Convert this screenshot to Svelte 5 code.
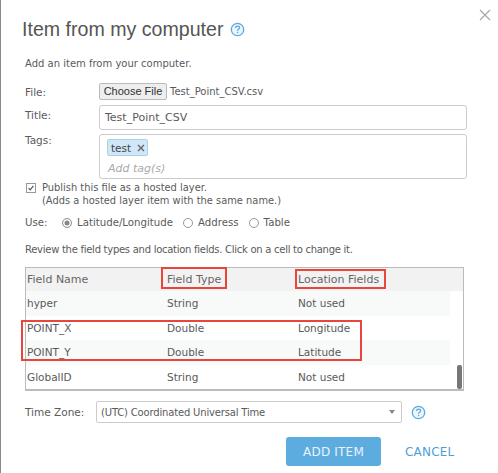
<script>
  const rows = [
    { name: "hyper", type: "String", loc: "Not used" },
    { name: "POINT_X", type: "Double", loc: "Longitude" },
    { name: "POINT_Y", type: "Double", loc: "Latitude" },
    { name: "GlobalID", type: "String", loc: "Not used" }
  ];
  const useOptions = ["Latitude/Longitude", "Address", "Table"];
</script>

{#snippet help(cls)}
  <svg class={cls} viewBox="0 0 16 16" aria-hidden="true">
    <circle cx="8" cy="8" r="6.6" fill="#eef6fc" stroke="#5ea9dd" stroke-width="1.4" />
    <path d="M5.9 6.3c0-1.3 1-2 2.2-2s2.1.7 2.1 1.8c0 1.6-2.2 1.6-2.2 3.3" fill="none" stroke="#5ea9dd" stroke-width="1.4" />
    <rect x="7.3" y="10.4" width="1.5" height="1.5" fill="#5ea9dd" />
  </svg>
{/snippet}

<div class="dialog">
  <button class="close" aria-label="Close">
    <svg viewBox="0 0 12 12"><path d="M1 1l10 10M11 1L1 11" stroke="#a8a8a8" stroke-width="1.2" fill="none" /></svg>
  </button>

  <h1>Item from my computer {@render help("help-title")}</h1>
  <p class="intro">Add an item from your computer.</p>

  <div class="form-row file-row">
    <span class="label">File:</span>
    <span class="choose">Choose File</span>
    <span class="filename">Test_Point_CSV.csv</span>
  </div>
  <div class="form-row title-row">
    <span class="label">Title:</span>
    <div class="input">Test_Point_CSV</div>
  </div>
  <div class="form-row tags-row">
    <span class="label">Tags:</span>
    <div class="input tags">
      <span class="tag">test <svg class="tag-x" viewBox="0 0 8 8"><path d="M1 1l6 6M7 1L1 7" stroke="#666" stroke-width="1.4" fill="none" /></svg></span>
      <span class="placeholder">Add tag(s)</span>
    </div>
  </div>

  <div class="publish">
    <span class="checkbox">
      <svg viewBox="0 0 10 10"><path d="M2 5.2l2 2.2 4-5" fill="none" stroke="#555" stroke-width="1.5" /></svg>
    </span>
    <span>Publish this file as a hosted layer.<br />(Adds a hosted layer item with the same name.)</span>
  </div>

  <div class="use">
    <span class="use-label">Use:</span>
    {#each useOptions as opt, i}
      <span class="radio-opt">
        <span class="radio" class:on={i === 0}></span>{opt}
      </span>
    {/each}
  </div>

  <p class="review">Review the field types and location fields. Click on a cell to change it.</p>

  <div class="table">
    <div class="thead">
      <span>Field Name</span><span>Field Type</span><span>Location Fields</span>
    </div>
    {#each rows as row, i}
      <div class="row" class:alt={i % 2 === 0}>
        <span>{row.name}</span><span>{row.type}</span><span>{row.loc}</span>
      </div>
    {/each}
    <div class="thumb"></div>
    <div class="mark mark-type"></div>
    <div class="mark mark-loc"></div>
    <div class="mark mark-rows"></div>
  </div>

  <div class="tz">
    <span class="tz-label">Time Zone:</span>
    <div class="select">
      <span>(UTC) Coordinated Universal Time</span>
      <span class="caret"></span>
    </div>
    {@render help("help-tz")}
  </div>

  <div class="actions">
    <button class="add">ADD ITEM</button>
    <button class="cancel">CANCEL</button>
  </div>
</div>

<style>
  :global(body) {
    margin: 0;
    background: #fff;
  }
  .dialog {
    position: relative;
    box-sizing: border-box;
    width: 498px;
    height: 473px;
    padding: 0 0 0 24px;
    border-left: 1px solid #8a8a8a;
    background: #fff;
    color: #5a5a5a;
    font-family: "DejaVu Sans", sans-serif;
    font-size: 10.5px;
    overflow: hidden;
  }
  .close {
    position: absolute;
    top: 9px;
    right: 7px;
    width: 12px;
    height: 12px;
    padding: 0;
    border: 0;
    background: none;
  }
  .close svg {
    display: block;
  }
  h1 {
    margin: 0 0 0 -3px;
    padding-top: 15px;
    height: 28px;
    line-height: 28px;
    font-family: "Liberation Sans", sans-serif;
    font-size: 19.6px;
    font-weight: 400;
    color: #555;
    display: flex;
    align-items: center;
    gap: 7px;
  }
  .help-title {
    width: 15px;
    height: 15px;
  }
  .intro {
    margin: 14px 0 0;
    height: 13px;
    line-height: 13px;
    font-size: 10px;
  }
  .form-row {
    display: flex;
  }
  .label {
    width: 74px;
    flex: none;
  }
  .file-row {
    margin-top: 13px;
    align-items: center;
    height: 17px;
  }
  .choose {
    box-sizing: border-box;
    width: 68px;
    height: 17px;
    line-height: 15px;
    text-align: center;
    border: 1px solid #bbb;
    border-radius: 2px;
    background: #eee;
    font-family: "Liberation Sans", sans-serif;
    font-size: 11px;
    color: #333;
  }
  .filename {
    margin-left: 3px;
    font-size: 10px;
  }
  .input {
    box-sizing: border-box;
    width: 368px;
    border: 1px solid #ccc;
    border-radius: 3px;
    background: #fff;
  }
  .title-row {
    margin-top: 5px;
  }
  .title-row .label {
    padding-top: 4px;
  }
  .title-row .input {
    height: 25px;
    line-height: 23px;
    padding-left: 5px;
    font-size: 11px;
  }
  .tags-row {
    margin-top: 4px;
  }
  .tags {
    height: 45px;
    padding: 4px 7px;
    display: flex;
    flex-direction: column;
    align-items: flex-start;
  }
  .tag {
    box-sizing: border-box;
    display: flex;
    align-items: center;
    flex: none;
    height: 17px;
    padding: 0 2px 0 3px;
    border: 1px solid #a9d2ee;
    border-radius: 2px;
    background: #cfe7f7;
    font-size: 10.5px;
    color: #444;
  }
  .tag-x {
    width: 8px;
    height: 8px;
    margin-left: 6px;
  }
  .placeholder {
    margin: 6px 0 0 1px;
    font-style: italic;
    font-size: 11px;
    color: #aaa;
  }
  .publish {
    display: flex;
    margin-top: 2px;
    line-height: 13px;
    font-size: 9.9px;
  }
  .checkbox {
    box-sizing: border-box;
    width: 10px;
    height: 10px;
    margin: 2px 6px 0 1px;
    border: 1px solid #999;
    flex: none;
  }
  .checkbox svg {
    display: block;
  }
  .use {
    display: flex;
    align-items: center;
    margin-top: 9px;
    height: 13px;
    font-size: 10.2px;
  }
  .use-label {
    width: 37px;
  }
  .radio-opt {
    display: flex;
    align-items: center;
    margin-right: 10px;
  }
  .radio {
    box-sizing: border-box;
    width: 10px;
    height: 10px;
    margin-right: 5px;
    border: 1px solid #999;
    border-radius: 50%;
  }
  .radio.on {
    background: #888;
    box-shadow: inset 0 0 0 1.5px #fff;
  }
  .review {
    margin: 14px 0 0;
    height: 13px;
    line-height: 13px;
    font-size: 10px;
    letter-spacing: -0.27px;
  }
  .table {
    position: relative;
    box-sizing: border-box;
    width: 439px;
    height: 124px;
    margin-top: 11px;
    border: 1px solid #bbb;
    border-bottom-width: 2px;
  }
  .thead,
  .row {
    display: grid;
    grid-template-columns: 140px 131px 1fr;
    align-items: center;
    padding-left: 1px;
  }
  .thead {
    height: 23px;
    background: #f2f2f2;
    font-size: 11px;
    color: #666;
  }
  .row {
    width: 423px;
    height: 24.5px;
  }
  .row.alt {
    background: #f8f9f9;
  }
  .thumb {
    position: absolute;
    right: 1px;
    bottom: 0;
    width: 5px;
    height: 24px;
    border-radius: 2px;
    background: #777;
  }
  .mark {
    position: absolute;
    box-sizing: border-box;
    border: 2px solid #e8453c;
  }
  .mark-type {
    left: 135px;
    top: -1px;
    width: 66px;
    height: 22px;
  }
  .mark-loc {
    left: 269px;
    top: 1px;
    width: 91px;
    height: 20px;
  }
  .mark-rows {
    left: -5px;
    top: 52px;
    width: 341px;
    height: 41px;
  }
  .tz {
    display: flex;
    align-items: center;
    margin-top: 10px;
    height: 22px;
  }
  .tz-label {
    width: 71px;
    flex: none;
  }
  .select {
    box-sizing: border-box;
    width: 306px;
    height: 22px;
    padding: 0 6px 0 4px;
    display: flex;
    align-items: center;
    justify-content: space-between;
    border: 1px solid #ccc;
    border-radius: 2px;
    font-size: 10px;
    letter-spacing: -0.17px;
  }
  .caret {
    border: 3.5px solid transparent;
    border-top: 4px solid #888;
    border-bottom: 0;
  }
  .help-tz {
    width: 15px;
    height: 15px;
    margin-left: 9px;
  }
  .actions {
    display: flex;
    align-items: center;
    margin-top: 14px;
    margin-left: 261px;
  }
  .actions button {
    font-family: "DejaVu Sans", sans-serif;
    font-size: 12px;
    letter-spacing: 0.2px;
    border: 0;
    padding: 0;
  }
  .add {
    width: 95px;
    height: 29px;
    border-radius: 3px;
    background: #5dacdf;
    color: #e8f4fb;
  }
  .cancel {
    margin-left: 24px;
    background: none;
    color: #4f9fd6;
  }
</style>
